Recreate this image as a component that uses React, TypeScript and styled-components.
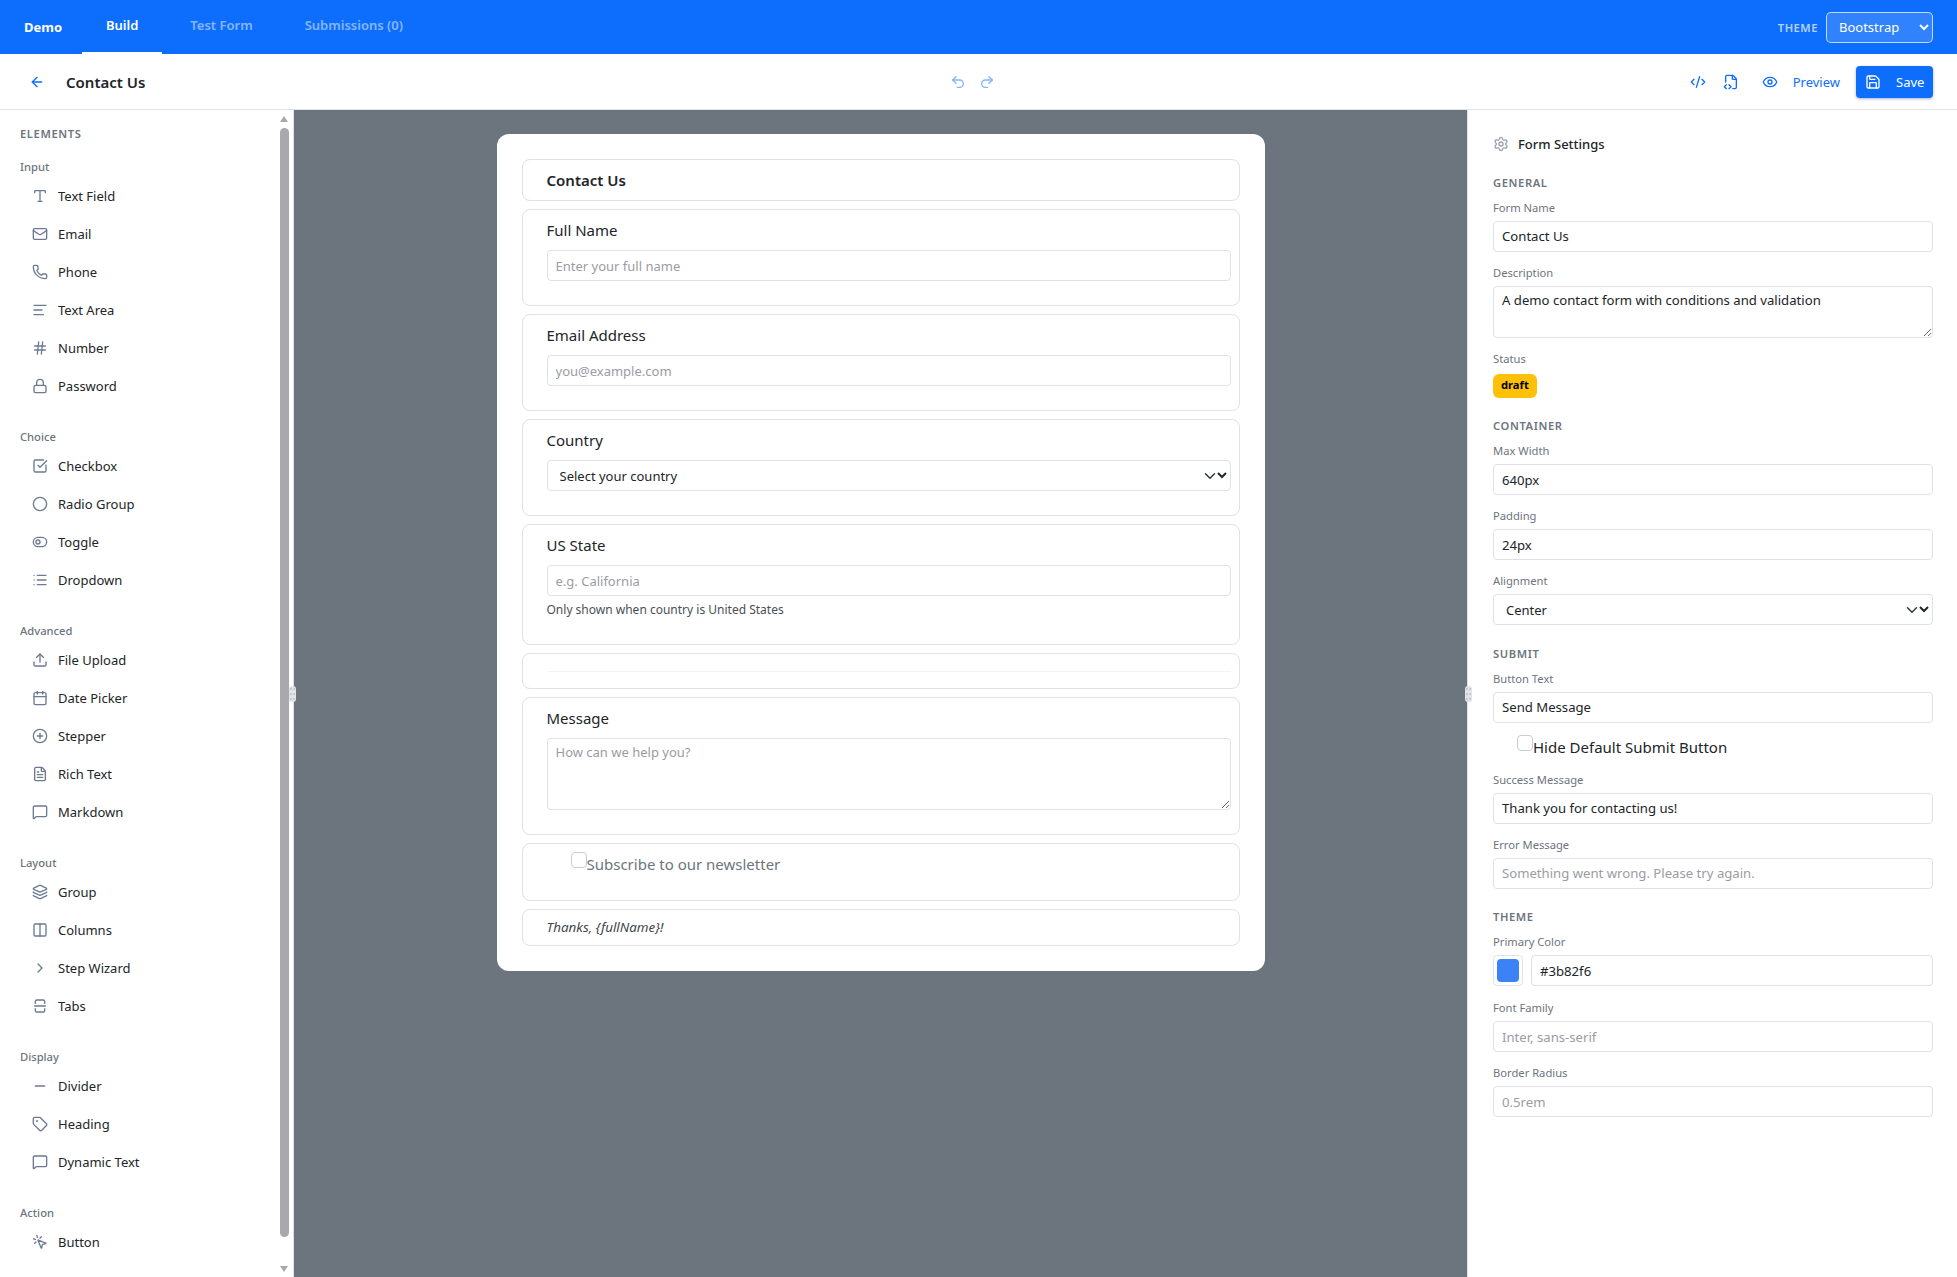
import React from "react";
import styled, { createGlobalStyle } from "styled-components";
import {
  ArrowLeft, Calendar, ChevronRight, Circle, CirclePlus, CodeXml, Columns2, Eye, FileCode2, FileText, Hash,
  Layers, List, Lock, Mail, MessageSquare, Minus, MousePointerClick, Phone, Redo2, Save, Settings, SquareCheckBig,
  SquareSplitVertical, Tag, TextAlignStart, ToggleLeft, Type, Undo2, Upload,
} from "lucide-react";

const FONT = `"Noto Sans", "Open Sans", sans-serif`;

const GlobalStyle = createGlobalStyle`
  html, body { margin: 0; padding: 0; height: 100%; overflow: hidden; }
  body { font-family: ${FONT}; font-size: 13px; color: #212529; background: #fff; }
  * { box-sizing: border-box; }
  input, textarea, select { font-family: inherit; }
`;

const chevron = `url("data:image/svg+xml,%3csvg xmlns='http://www.w3.org/2000/svg' viewBox='0 0 16 16'%3e%3cpath fill='none' stroke='%23343a40' stroke-linecap='round' stroke-linejoin='round' stroke-width='2' d='m2 5 6 6 6-6'/%3e%3c/svg%3e")`;

const elementGroups = [
  { title: "Input", items: [
    { label: "Text Field", Icon: Type }, { label: "Email", Icon: Mail }, { label: "Phone", Icon: Phone },
    { label: "Text Area", Icon: TextAlignStart }, { label: "Number", Icon: Hash }, { label: "Password", Icon: Lock },
  ] },
  { title: "Choice", items: [
    { label: "Checkbox", Icon: SquareCheckBig }, { label: "Radio Group", Icon: Circle },
    { label: "Toggle", Icon: ToggleLeft }, { label: "Dropdown", Icon: List },
  ] },
  { title: "Advanced", items: [
    { label: "File Upload", Icon: Upload }, { label: "Date Picker", Icon: Calendar }, { label: "Stepper", Icon: CirclePlus },
    { label: "Rich Text", Icon: FileText }, { label: "Markdown", Icon: MessageSquare },
  ] },
  { title: "Layout", items: [
    { label: "Group", Icon: Layers }, { label: "Columns", Icon: Columns2 },
    { label: "Step Wizard", Icon: ChevronRight }, { label: "Tabs", Icon: SquareSplitVertical },
  ] },
  { title: "Display", items: [
    { label: "Divider", Icon: Minus }, { label: "Heading", Icon: Tag }, { label: "Dynamic Text", Icon: MessageSquare },
  ] },
  { title: "Action", items: [{ label: "Button", Icon: MousePointerClick }] },
];

export default function App() {
  return (
    <Page>
      <GlobalStyle />
      <TopBar>
        <Brand>Demo</Brand>
        <Tab $active>Build</Tab>
        <Tab>Test Form</Tab>
        <Tab>Submissions (0)</Tab>
        <Spacer />
        <ThemeLabel>THEME</ThemeLabel>
        <ThemeSelect defaultValue="Bootstrap">
          <option>Bootstrap</option>
        </ThemeSelect>
      </TopBar>

      <Toolbar>
        <ToolbarLeft>
          <IconButton $width={16}><ArrowLeft size={16} /></IconButton>
          <FormTitle>Contact Us</FormTitle>
        </ToolbarLeft>
        <ToolbarCenter>
          <IconButton $width={16} $dim><Undo2 size={16} /></IconButton>
          <IconButton $width={16} $dim><Redo2 size={16} /></IconButton>
        </ToolbarCenter>
        <ToolbarRight>
          <IconButton $width={32}><CodeXml size={16} /></IconButton>
          <IconButton $width={32}><FileCode2 size={16} /></IconButton>
          <PreviewButton><Eye size={16} />Preview</PreviewButton>
          <SaveButton><Save size={16} />Save</SaveButton>
        </ToolbarRight>
      </Toolbar>

      <Workspace>
        <Sidebar>
          <SidebarHeading>ELEMENTS</SidebarHeading>
          {elementGroups.map((group) => (
            <ElementGroup key={group.title}>
              <GroupTitle>{group.title}</GroupTitle>
              {group.items.map(({ label, Icon }) => (
                <ElementItem key={label}>
                  <Icon size={16} />
                  {label}
                </ElementItem>
              ))}
            </ElementGroup>
          ))}
          <ScrollUp />
          <ScrollThumb />
          <ScrollDown />
          <Grip $side="left" />
        </Sidebar>

        <Canvas>
          <FormCard>
            <FormItem><HeadingText>Contact Us</HeadingText></FormItem>
            <FormItem>
              <FieldLabel>Full Name</FieldLabel>
              <CanvasInput placeholder="Enter your full name" readOnly />
            </FormItem>
            <FormItem>
              <FieldLabel>Email Address</FieldLabel>
              <CanvasInput placeholder="you@example.com" readOnly />
            </FormItem>
            <FormItem>
              <FieldLabel>Country</FieldLabel>
              <CanvasSelect defaultValue="">
                <option value="">Select your country</option>
              </CanvasSelect>
            </FormItem>
            <FormItem>
              <FieldLabel>US State</FieldLabel>
              <CanvasInput $flush placeholder="e.g. California" readOnly />
              <HelpText>Only shown when country is United States</HelpText>
            </FormItem>
            <FormItem><Rule /></FormItem>
            <FormItem>
              <FieldLabel>Message</FieldLabel>
              <CanvasTextarea placeholder="How can we help you?" readOnly />
            </FormItem>
            <FormItem>
              <CheckRow $muted>
                <CheckBox type="checkbox" readOnly />
                Subscribe to our newsletter
              </CheckRow>
            </FormItem>
            <FormItem><DynamicText>Thanks, {"{fullName}"}!</DynamicText></FormItem>
          </FormCard>
          <Grip $side="right" />
        </Canvas>

        <SettingsPanel>
          <PanelTitle><Settings size={16} />Form Settings</PanelTitle>

          <SectionTitle>GENERAL</SectionTitle>
          <Field>
            <SmallLabel>Form Name</SmallLabel>
            <PanelInput defaultValue="Contact Us" readOnly />
          </Field>
          <Field>
            <SmallLabel>Description</SmallLabel>
            <PanelTextarea defaultValue="A demo contact form with conditions and validation" readOnly />
          </Field>
          <Field>
            <SmallLabel>Status</SmallLabel>
            <StatusBadge>draft</StatusBadge>
          </Field>

          <SectionTitle>CONTAINER</SectionTitle>
          <Field>
            <SmallLabel>Max Width</SmallLabel>
            <PanelInput defaultValue="640px" readOnly />
          </Field>
          <Field>
            <SmallLabel>Padding</SmallLabel>
            <PanelInput defaultValue="24px" readOnly />
          </Field>
          <Field>
            <SmallLabel>Alignment</SmallLabel>
            <PanelSelect defaultValue="Center">
              <option>Center</option>
            </PanelSelect>
          </Field>

          <SectionTitle>SUBMIT</SectionTitle>
          <Field>
            <SmallLabel>Button Text</SmallLabel>
            <PanelInput defaultValue="Send Message" readOnly />
          </Field>
          <Field>
            <CheckRow>
              <CheckBox type="checkbox" readOnly />
              Hide Default Submit Button
            </CheckRow>
          </Field>
          <Field>
            <SmallLabel>Success Message</SmallLabel>
            <PanelInput defaultValue="Thank you for contacting us!" readOnly />
          </Field>
          <Field>
            <SmallLabel>Error Message</SmallLabel>
            <PanelInput placeholder="Something went wrong. Please try again." readOnly />
          </Field>

          <SectionTitle>THEME</SectionTitle>
          <Field>
            <SmallLabel>Primary Color</SmallLabel>
            <ColorRow>
              <Swatch><SwatchFill /></Swatch>
              <PanelInput defaultValue="#3b82f6" readOnly />
            </ColorRow>
          </Field>
          <Field>
            <SmallLabel>Font Family</SmallLabel>
            <PanelInput placeholder="Inter, sans-serif" readOnly />
          </Field>
          <Field>
            <SmallLabel>Border Radius</SmallLabel>
            <PanelInput placeholder="0.5rem" readOnly />
          </Field>
        </SettingsPanel>
      </Workspace>
    </Page>
  );
}

// --- Styled Components ---
const Page = styled.div`
  height: 100vh;
  display: flex;
  flex-direction: column;
  overflow: hidden;
`;

const TopBar = styled.header`
  height: 54px;
  flex: none;
  display: flex;
  align-items: center;
  padding: 0 24px;
  background: #0d6efd;
`;

const Brand = styled.div`
  width: 58px;
  color: #fff;
  font-weight: 700;
  font-size: 13px;
`;

const Tab = styled.div<{ $active?: boolean }>`
  height: 54px;
  display: flex;
  align-items: center;
  padding: 0 24px 2px;
  margin-right: 4px;
  font-size: 13px;
  font-weight: 600;
  color: ${(p) => (p.$active ? "#fff" : "rgba(255, 255, 255, 0.5)")};
  border-bottom: 2px solid ${(p) => (p.$active ? "#fff" : "transparent")};
`;

const Spacer = styled.div`
  flex: 1;
`;

const ThemeLabel = styled.span`
  font-size: 11.2px;
  font-weight: 600;
  letter-spacing: 0.5px;
  color: rgba(255, 255, 255, 0.7);
  margin-right: 8px;
`;

const ThemeSelect = styled.select`
  width: 107px;
  height: 31px;
  padding: 0 0 0 8px;
  font-size: 13px;
  color: #fff;
  background: rgba(255, 255, 255, 0.15);
  border: 1px solid rgba(255, 255, 255, 0.7);
  border-radius: 5px;
  outline: none;
`;

const Toolbar = styled.div`
  height: 56px;
  flex: none;
  display: grid;
  grid-template-columns: 1fr auto 1fr;
  align-items: center;
  padding: 0 24px 0 29px;
  border-bottom: 1px solid #dee2e6;
`;

const ToolbarLeft = styled.div`
  display: flex;
  align-items: center;
  gap: 21px;
`;

const FormTitle = styled.div`
  font-size: 15px;
  font-weight: 600;
`;

const ToolbarCenter = styled.div`
  display: flex;
  gap: 13px;
  margin-right: 18px;
`;

const ToolbarRight = styled.div`
  display: flex;
  align-items: center;
  justify-content: flex-end;
  gap: 1px;
`;

const IconButton = styled.button<{ $width: number; $dim?: boolean }>`
  width: ${(p) => p.$width}px;
  height: 32px;
  display: flex;
  align-items: center;
  justify-content: center;
  padding: 0;
  border: none;
  background: none;
  color: #0d6efd;
  opacity: ${(p) => (p.$dim ? 0.5 : 1)};
`;

const PreviewButton = styled.button`
  height: 32px;
  display: flex;
  align-items: center;
  gap: 15px;
  padding: 0 8px;
  margin: 0 7px 0 6px;
  border: none;
  background: none;
  color: #0d6efd;
  font-family: inherit;
  font-size: 13px;
`;

const SaveButton = styled.button`
  width: 77px;
  height: 32px;
  display: flex;
  align-items: center;
  gap: 15px;
  padding: 0 8px 0 9px;
  border: none;
  border-radius: 4px;
  background: #0d6efd;
  box-shadow: 0 1px 3px rgba(13, 30, 120, 0.35);
  color: #fff;
  font-family: inherit;
  font-size: 13px;
`;

const Workspace = styled.div`
  flex: 1;
  min-height: 0;
  display: flex;
`;

const Sidebar = styled.aside`
  position: relative;
  width: 294px;
  flex: none;
  padding: 15px 0 0 20px;
  border-right: 1px solid #dee2e6;
`;

const SidebarHeading = styled.div`
  font-size: 11.2px;
  line-height: 18px;
  font-weight: 600;
  color: #6c757d;
  letter-spacing: 0.6px;
  margin-bottom: 15px;
`;

const ElementGroup = styled.div`
  margin-bottom: 23px;
`;

const GroupTitle = styled.div`
  font-size: 11.2px;
  line-height: 18px;
  font-weight: 500;
  color: #6c757d;
  margin-bottom: 1px;
`;

const ElementItem = styled.div`
  height: 38px;
  display: flex;
  align-items: center;
  gap: 10px;
  padding-left: 12px;
  font-size: 13px;
  color: #212529;

  svg {
    color: #6c7a92;
    flex: none;
  }
`;

const ScrollUp = styled.div`
  position: absolute;
  top: 6px;
  right: 5px;
  border-left: 4.5px solid transparent;
  border-right: 4.5px solid transparent;
  border-bottom: 6px solid #a8a8ad;
`;

const ScrollDown = styled.div`
  position: absolute;
  bottom: 5px;
  right: 5px;
  border-left: 4.5px solid transparent;
  border-right: 4.5px solid transparent;
  border-top: 6px solid #a8a8ad;
`;

const ScrollThumb = styled.div`
  position: absolute;
  top: 18px;
  right: 4px;
  width: 9px;
  height: 1109px;
  border-radius: 5px;
  background: #a8a8ad;
`;

const Grip = styled.div<{ $side: "left" | "right" }>`
  position: absolute;
  top: 576px;
  ${(p) => (p.$side === "left" ? "right: -3px;" : "right: -5px;")}
  z-index: 2;
  width: 7px;
  height: 16px;
  border-radius: 3px;
  background-color: #e2e4ea;
  background-image: radial-gradient(circle, #a9aebb 1px, transparent 1.1px);
  background-size: 3.5px 5px;
  background-position: 0 0.5px;
`;

const Canvas = styled.main`
  position: relative;
  flex: 1;
  min-width: 0;
  display: flex;
  justify-content: center;
  align-items: flex-start;
  padding-top: 24px;
  background: #6c757d;
`;

const FormCard = styled.div`
  width: 768px;
  display: flex;
  flex-direction: column;
  gap: 8px;
  padding: 25px;
  background: #fff;
  border-radius: 12px;
`;

const FormItem = styled.div`
  padding: 8px 8px 8px 24px;
  border: 1px solid #dee2e6;
  border-radius: 8px;
`;

const HeadingText = styled.div`
  font-size: 15px;
  line-height: 24px;
  font-weight: 600;
`;

const FieldLabel = styled.div`
  font-size: 15px;
  line-height: 24px;
  margin-bottom: 8px;
`;

const controlStyles = `
  display: block;
  width: 100%;
  height: 31px;
  padding: 0 8px;
  font-size: 13px;
  color: #212529;
  background: #fff;
  border: 1px solid #dee2e6;
  border-radius: 4px;
  outline: none;

  &::placeholder {
    color: #9a9ca5;
  }
`;

const CanvasInput = styled.input<{ $flush?: boolean }>`
  ${controlStyles}
  margin-bottom: ${(p) => (p.$flush ? 0 : 16)}px;
`;

const CanvasSelect = styled.select`
  ${controlStyles}
  padding-left: 8px;
  margin-bottom: 16px;
  background-image: ${chevron};
  background-repeat: no-repeat;
  background-position: right 13px center;
  background-size: 14px 12px;
`;

const CanvasTextarea = styled.textarea`
  ${controlStyles}
  height: 72px;
  padding: 4px 8px;
  margin-bottom: 16px;
  resize: vertical;
`;

const HelpText = styled.div`
  margin: 4px 0 17px;
  font-size: 12px;
  line-height: 19px;
  color: #495057;
`;

const Rule = styled.hr`
  margin: 8.5px 0;
  border: 0;
  border-top: 1px solid #f3f4f5;
`;

const CheckRow = styled.label<{ $muted?: boolean }>`
  display: flex;
  align-items: flex-start;
  min-height: 24px;
  padding-left: 24px;
  font-size: 15px;
  line-height: 24px;
  color: ${(p) => (p.$muted ? "#6c757d" : "#212529")};
  margin-bottom: ${(p) => (p.$muted ? 16 : 0)}px;
`;

const CheckBox = styled.input`
  appearance: none;
  width: 16px;
  height: 16px;
  margin: 0;
  flex: none;
  background: #fff;
  border: 1px solid #c9cdd2;
  border-radius: 4px;
`;

const DynamicText = styled.div`
  font-size: 13.4px;
  line-height: 19px;
  font-style: italic;
  color: #3f464d;
`;

const SettingsPanel = styled.aside`
  position: relative;
  width: 490px;
  flex: none;
  padding: 24px 24px 0 25px;
  border-left: 1px solid #dee2e6;
`;

const PanelTitle = styled.div`
  display: flex;
  align-items: center;
  gap: 9px;
  height: 20px;
  font-size: 13px;
  font-weight: 500;

  svg {
    color: #9aa1a9;
  }
`;

const SectionTitle = styled.div`
  font-size: 11.2px;
  line-height: 18px;
  font-weight: 600;
  color: #6c757d;
  letter-spacing: 0.6px;
  margin: 19.5px 0 7px;
`;

const Field = styled.div`
  margin-bottom: 12px;
`;

const SmallLabel = styled.div`
  font-size: 11.2px;
  line-height: 18px;
  color: #6c757d;
  margin-bottom: 4px;
`;

const PanelInput = styled.input`
  ${controlStyles}
  font-size: 13.15px;
`;

const PanelTextarea = styled.textarea`
  ${controlStyles}
  height: 52px;
  padding: 4px 8px;
  font-size: 13.15px;
  resize: vertical;
`;

const PanelSelect = styled.select`
  ${controlStyles}
  background-image: ${chevron};
  background-repeat: no-repeat;
  background-position: right 13px center;
  background-size: 14px 12px;
`;

const StatusBadge = styled.div`
  display: inline-block;
  height: 24px;
  margin-top: 2px;
  padding: 0 8px;
  font-size: 11.2px;
  line-height: 22px;
  font-weight: 700;
  color: #000;
  background: #ffc107;
  border-radius: 6px;
  vertical-align: top;
`;

const ColorRow = styled.div`
  display: flex;
  gap: 8px;
  padding-bottom: 1px;
`;

const Swatch = styled.div`
  width: 30px;
  height: 31px;
  flex: none;
  padding: 3px;
  border: 1px solid #dee2e6;
  border-radius: 4px;
`;

const SwatchFill = styled.div`
  width: 100%;
  height: 100%;
  border-radius: 4px;
  background: #3b82f6;
`;
